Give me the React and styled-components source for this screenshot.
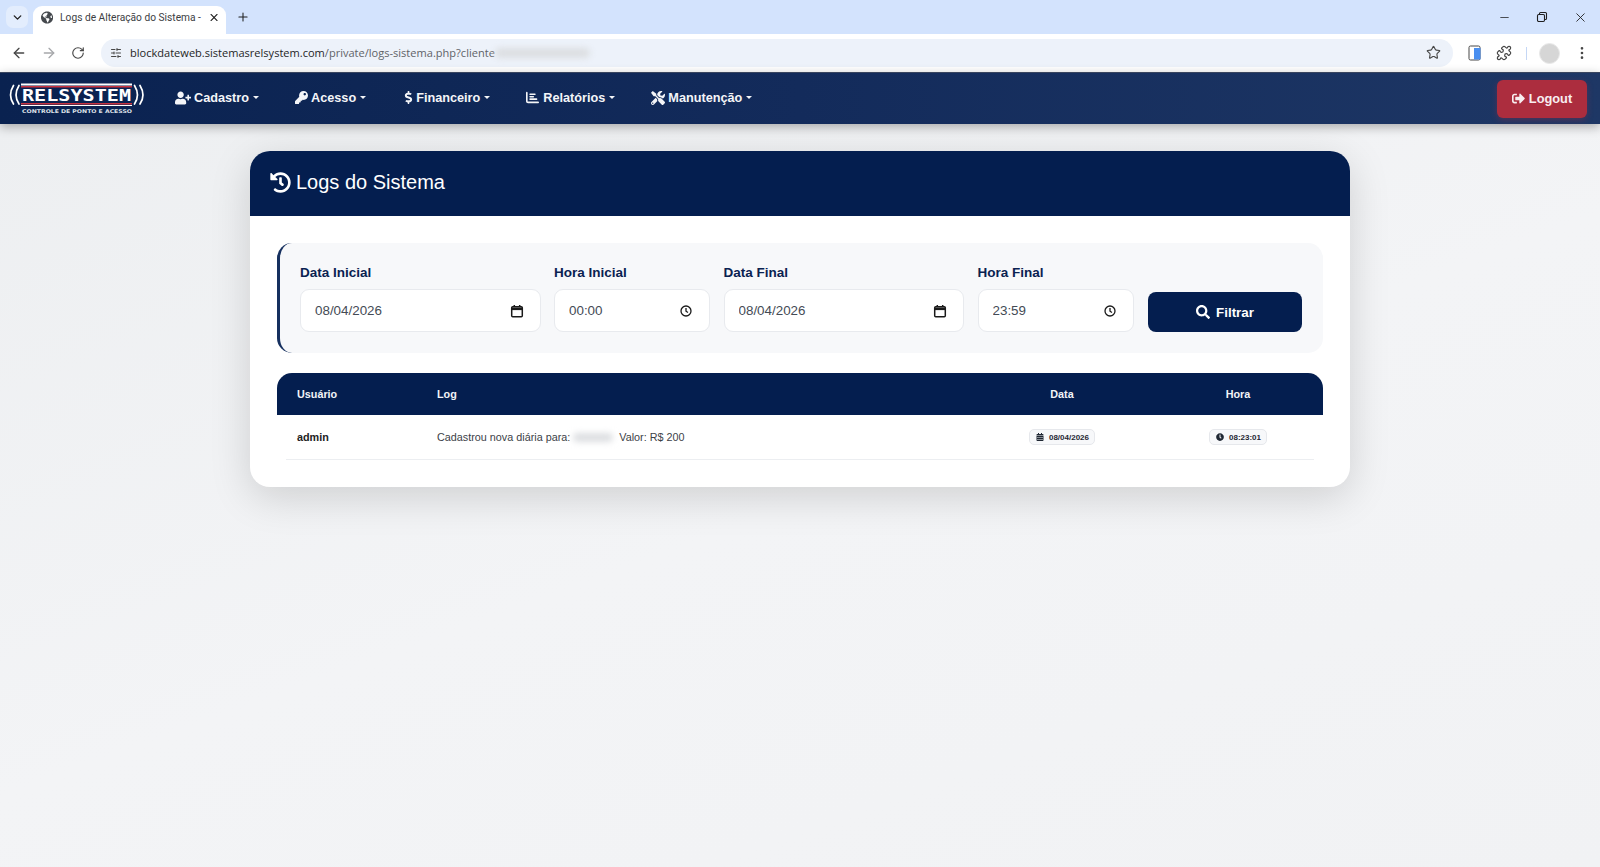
import React from 'react';
import styled, { createGlobalStyle } from 'styled-components';
import {
  ChevronDown, X, Plus, Minus, ArrowLeft, ArrowRight, RotateCw,
  SlidersHorizontal, Star, Puzzle, MoreVertical,
} from 'lucide-react';
import {
  FaUserPlus, FaKey, FaDollarSign, FaTools, FaSignOutAlt,
  FaHistory, FaSearch, FaCalendarAlt, FaClock, FaGlobeAmericas,
} from 'react-icons/fa';
import { FaChartBar } from 'react-icons/fa6';

const GlobalStyle = createGlobalStyle`
  * { box-sizing: border-box; }
  html, body { margin: 0; height: 100%; overflow: hidden; }
  body { font-family: "Liberation Sans", Arial, sans-serif; background: #f2f3f5; }
`;

const Page = styled.div`
  height: 867px;
  display: flex;
  flex-direction: column;
  background: linear-gradient(160deg, #eceef0 0%, #f3f4f6 55%, #f1f2f4 100%);
`;

const TabStrip = styled.div`
  height: 34px;
  flex: none;
  background: #d3e3fd;
  display: flex;
  align-items: flex-end;
  padding-left: 6px;
  color: #1f1f1f;
`;

const TabSearch = styled.div`
  width: 22px;
  height: 22px;
  margin-bottom: 6px;
  margin-right: 5px;
  border-radius: 7px;
  background: #e3edfd;
  display: flex;
  align-items: center;
  justify-content: center;
`;

const Tab = styled.div`
  width: 193px;
  height: 28px;
  background: #fff;
  border-radius: 9px 9px 0 0;
  display: flex;
  align-items: center;
  padding: 0 6px 5px 8px;
  font-family: Roboto, sans-serif;
  font-size: 10.2px;
  gap: 7px;
`;

const TabTitle = styled.span`
  flex: 1;
  white-space: nowrap;
  color: #3c4043;
`;

const NewTab = styled.div`
  width: 28px;
  height: 28px;
  display: flex;
  align-items: center;
  justify-content: center;
  margin-left: 3px;
  margin-bottom: 3px;
`;

const WindowControls = styled.div`
  margin-left: auto;
  height: 34px;
  display: flex;
  align-items: center;
  gap: 25px;
  padding-right: 12px;
`;

const RestoreIcon = () => (
  <svg width="12" height="12" viewBox="0 0 12 12" fill="none" stroke="#1f1f1f" strokeWidth="1.1">
    <rect x="1.5" y="3.5" width="7" height="7" rx="1.2" />
    <path d="M3.5 3.5V2.6a1.1 1.1 0 0 1 1.1-1.1h4.8a1.1 1.1 0 0 1 1.1 1.1v4.8a1.1 1.1 0 0 1-1.1 1.1h-.9" />
  </svg>
);

const Toolbar = styled.div`
  height: 38px;
  flex: none;
  background: #fff;
  display: flex;
  align-items: center;
  padding-left: 11px;
  color: #474747;
`;

const NavButtons = styled.div`
  display: flex;
  align-items: center;
  gap: 14px;
  margin-right: 16px;
`;

const UrlBar = styled.div`
  width: 1352px;
  height: 28px;
  border-radius: 14px;
  background: #edf2fa;
  display: flex;
  align-items: center;
  padding-left: 6px;
  position: relative;
`;

const SiteChip = styled.div`
  width: 18px;
  display: flex;
  justify-content: center;
  margin-right: 5px;
`;

const UrlText = styled.span`
  font-family: "Open Sans", sans-serif;
  font-size: 11.05px;
  color: #1f1f1f;
  white-space: nowrap;
  margin-bottom: 2px;
`;

const UrlPath = styled.span`
  color: #5f6368;
`;

const Blurred = styled.span`
  display: inline-block;
  width: ${(p) => p.$w}px;
  height: ${(p) => p.$h}px;
  background: #dcdee1;
  filter: blur(3px);
  border-radius: 6px;
  flex: none;
`;

const UrlStar = styled.div`
  position: absolute;
  right: 12px;
  top: 6px;
  display: flex;
`;

const ToolbarIcons = styled.div`
  display: flex;
  align-items: center;
  margin-left: 15px;
  gap: 14px;
`;

const Divider = styled.div`
  width: 1px;
  height: 13px;
  background: #c5d7f5;
`;

const Avatar = styled.div`
  width: 21px;
  height: 21px;
  border-radius: 50%;
  background: #d6d6d6;
  border: 1px solid #e8e8e8;
  margin-left: -2px;
`;

const SidePanelIcon = () => (
  <svg width="14" height="16" viewBox="0 0 14 16">
    <rect x="1" y="1" width="11" height="14" rx="1.5" fill="#fff" stroke="#474747" />
    <path d="M6 3h6.5v11.5H6z" fill="#4a8ff0" />
  </svg>
);

const Navbar = styled.nav`
  height: 52px;
  flex: none;
  display: flex;
  align-items: center;
  padding: 0 13px 2px 9px;
  background: linear-gradient(90deg, #0a2250 0%, #132b5b 50%, #1e3765 100%);
  box-shadow: 0 3px 10px rgba(0, 0, 0, 0.3);
  border-top: 1px solid #39455f;
  position: relative;
`;

const NavList = styled.div`
  display: flex;
  align-items: center;
  gap: 36px;
  margin-left: 30px;
`;

const NavItem = styled.a`
  display: flex;
  align-items: center;
  color: #f4f5f8;
  font-size: 12.7px;
  font-weight: 700;
  white-space: nowrap;

  svg {
    margin-right: ${(p) => p.$gap}px;
  }
`;

const Caret = styled.span`
  width: 0;
  height: 0;
  margin-left: 4px;
  border-left: 3.5px solid transparent;
  border-right: 3.5px solid transparent;
  border-top: 3.5px solid #f4f5f8;
`;

const LogoutButton = styled.a`
  margin-left: auto;
  width: 90px;
  height: 38px;
  margin-top: 2px;
  border-radius: 6px;
  background: #ac2d3e;
  box-shadow: 0 2px 6px rgba(172, 45, 62, 0.35);
  color: #f8eef0;
  font-size: 12.8px;
  font-weight: 700;
  display: flex;
  align-items: center;
  justify-content: center;
  gap: 4px;
`;

const Logo = () => (
  <svg width="136" height="32" viewBox="0 0 136 32">
    <g fill="none" stroke="#fff" strokeWidth="1.7" strokeLinecap="round">
      <path d="M4.5 3.5C0.5 10 0.5 16 4.5 22" />
      <path d="M10 3.5C6 10 6 16 10 22" />
      <path d="M125.5 3.5C129.5 10 129.5 16 125.5 22" />
      <path d="M131 3.5C135 10 135 16 131 22" />
    </g>
    <rect x="12" y="1.5" width="111" height="2" fill="#fff" />
    <rect x="12" y="4" width="111" height="1.5" fill="#c9323f" />
    <rect x="12" y="21" width="111" height="1.5" fill="#c9323f" />
    <rect x="12" y="23" width="111" height="1" fill="#fff" />
    <text x="13" y="18.5" fill="#fff" fontFamily="DejaVu Sans Mono" fontWeight="700" fontSize="16" textLength="109" lengthAdjust="spacingAndGlyphs">RELSYSTEM</text>
    <text x="13" y="30.5" fill="#dde0e7" fontFamily="DejaVu Sans" fontWeight="700" fontSize="5" textLength="110" lengthAdjust="spacingAndGlyphs">CONTROLE DE PONTO E ACESSO</text>
  </svg>
);

const Main = styled.main`
  display: flex;
  justify-content: center;
  padding-top: 27px;
`;

const Card = styled.section`
  width: 1100px;
  background: #fff;
  border-radius: 20px;
  box-shadow: 0 10px 40px rgba(0, 0, 0, 0.15);
`;

const CardHeader = styled.header`
  height: 65px;
  background: #041e4f;
  border-radius: 20px 20px 0 0;
  display: flex;
  align-items: center;
  gap: 5px;
  padding: 0 20px 3px;
  color: #fff;
`;

const CardTitle = styled.h1`
  margin: 0;
  font-size: 20px;
  font-weight: 400;
`;

const CardBody = styled.div`
  padding: 27px;
`;

const FilterBox = styled.form`
  height: 110px;
  background: #f7f8fa;
  border-left: 3px solid #16305f;
  border-radius: 15px;
  display: grid;
  grid-template-columns: 240.5px 156px 240.5px 156px 155px;
  column-gap: 13.5px;
  align-items: end;
  padding: 0 20px 21px 20px;
`;

const Field = styled.label`
  display: flex;
  flex-direction: column;
  gap: 9px;
`;

const FieldLabel = styled.span`
  color: #0a2251;
  font-size: 13.5px;
  font-weight: 700;
`;

const InputWrap = styled.div`
  height: 43px;
  background: #fff;
  border: 1.5px solid #e8eaee;
  border-radius: 9px;
  display: flex;
  align-items: center;
  padding: 0 16px 0 14px;
  color: #111;
`;

const FieldInput = styled.input`
  flex: 1;
  min-width: 0;
  border: 0;
  outline: 0;
  padding: 0;
  background: transparent;
  font-family: "Liberation Sans", Arial, sans-serif;
  font-size: 13.4px;
  color: #444b55;
`;

const CalendarGlyph = () => (
  <svg width="14" height="14" viewBox="0 0 14 14" fill="none" stroke="#1a1a1a" strokeWidth="1.5">
    <rect x="1.7" y="2.7" width="10.6" height="10" rx="1" />
    <path d="M1.7 4.8h10.6" strokeWidth="2.6" />
    <path d="M4.3 1v2M9.7 1v2" />
  </svg>
);

const ClockGlyph = () => (
  <svg width="14" height="14" viewBox="0 0 14 14" fill="none" stroke="#1a1a1a" strokeWidth="1.3">
    <circle cx="7" cy="7" r="5" />
    <path d="M7 4v3.2l2 1.3" />
  </svg>
);

const FilterButton = styled.button`
  height: 40px;
  margin-left: 1px;
  border: 0;
  border-radius: 8px;
  background: #041e4f;
  color: #fff;
  font-family: "Liberation Sans", Arial, sans-serif;
  font-size: 13.4px;
  font-weight: 700;
  display: flex;
  align-items: center;
  justify-content: center;
  gap: 6px;
`;

const Table = styled.div`
  margin-top: 20px;
`;

const HeadRow = styled.div`
  height: 42px;
  background: #041e4f;
  border-radius: 15px 15px 0 0;
  display: grid;
  grid-template-columns: 140px 554px 182px 170px;
  align-items: center;
`;

const HeadCell = styled.div`
  color: #f2f4f8;
  font-size: 10.8px;
  font-weight: 700;
  padding-left: ${(p) => (p.$center ? 0 : 20)}px;
  text-align: ${(p) => (p.$center ? 'center' : 'left')};
`;

const BodyRow = styled.div`
  height: 45px;
  margin: 0 9px;
  border-bottom: 1px solid #eceef1;
  display: grid;
  grid-template-columns: 131px 554px 182px 161px;
  align-items: center;
`;

const UserCell = styled.div`
  padding-left: 11px;
  color: #222;
  font-size: 10.8px;
  font-weight: 700;
`;

const LogCell = styled.div`
  padding-left: 20px;
  color: #3c4147;
  font-size: 10.8px;
  display: flex;
  align-items: center;
`;

const BadgeCell = styled.div`
  display: flex;
  justify-content: center;

  &:last-child {
    padding-left: 9px;
  }
`;

const Badge = styled.span`
  height: 16px;
  padding: 0 5px 0 6px;
  background: #f7f8fa;
  border: 1px solid #e6e8ec;
  border-radius: 5px;
  color: #1f2733;
  font-size: 8px;
  font-weight: 700;
  display: inline-flex;
  align-items: center;
  gap: 5px;
`;

const fields = [
  { label: 'Data Inicial', value: '08/04/2026', kind: 'date' },
  { label: 'Hora Inicial', value: '00:00', kind: 'time' },
  { label: 'Data Final', value: '08/04/2026', kind: 'date' },
  { label: 'Hora Final', value: '23:59', kind: 'time' },
];

const menu = [
  { label: 'Cadastro', Icon: FaUserPlus, size: 16, gap: 3 },
  { label: 'Acesso', Icon: FaKey, size: 13, gap: 3 },
  { label: 'Financeiro', Icon: FaDollarSign, size: 13, gap: 1 },
  { label: 'Relatórios', Icon: FaChartBar, size: 13, gap: 4 },
  { label: 'Manutenção', Icon: FaTools, size: 14, gap: 3 },
];

export default function App() {
  return (
    <Page>
      <GlobalStyle />
      <TabStrip>
        <TabSearch><ChevronDown size={13} strokeWidth={2.5} /></TabSearch>
        <Tab>
          <FaGlobeAmericas size={13} color="#45494e" />
          <TabTitle>Logs de Alteração do Sistema -</TabTitle>
          <X size={13} strokeWidth={2.2} />
        </Tab>
        <NewTab><Plus size={14} strokeWidth={1.8} /></NewTab>
        <WindowControls>
          <Minus size={13} strokeWidth={1.4} />
          <RestoreIcon />
          <X size={15} strokeWidth={1.4} />
        </WindowControls>
      </TabStrip>
      <Toolbar>
        <NavButtons>
          <ArrowLeft size={16} strokeWidth={2} />
          <ArrowRight size={16} strokeWidth={2} color="#a6a8ab" />
          <RotateCw size={14} strokeWidth={2} />
        </NavButtons>
        <UrlBar>
          <SiteChip><SlidersHorizontal size={12} strokeWidth={2} /></SiteChip>
          <UrlText>blockdateweb.sistemasrelsystem.com<UrlPath>/private/logs-sistema.php?cliente</UrlPath></UrlText>
          <Blurred $w={95} $h={10} />
          <UrlStar><Star size={15} strokeWidth={1.8} /></UrlStar>
        </UrlBar>
        <ToolbarIcons>
          <SidePanelIcon />
          <Puzzle size={16} strokeWidth={1.8} />
          <Divider />
          <Avatar />
          <MoreVertical size={16} strokeWidth={2} />
        </ToolbarIcons>
      </Toolbar>
      <Navbar>
        <Logo />
        <NavList>
          {menu.map(({ label, Icon, size, gap }) => (
            <NavItem key={label} $gap={gap}>
              <Icon size={size} />
              {label}
              <Caret />
            </NavItem>
          ))}
        </NavList>
        <LogoutButton><FaSignOutAlt size={13} />Logout</LogoutButton>
      </Navbar>
      <Main>
        <Card>
          <CardHeader>
            <FaHistory size={21} />
            <CardTitle>Logs do Sistema</CardTitle>
          </CardHeader>
          <CardBody>
            <FilterBox>
              {fields.map((f) => (
                <Field key={f.label}>
                  <FieldLabel>{f.label}</FieldLabel>
                  <InputWrap>
                    <FieldInput readOnly value={f.value} />
                    {f.kind === 'date' ? <CalendarGlyph /> : <ClockGlyph />}
                  </InputWrap>
                </Field>
              ))}
              <FilterButton type="button"><FaSearch size={14} />Filtrar</FilterButton>
            </FilterBox>
            <Table>
              <HeadRow>
                <HeadCell>Usuário</HeadCell>
                <HeadCell>Log</HeadCell>
                <HeadCell $center>Data</HeadCell>
                <HeadCell $center>Hora</HeadCell>
              </HeadRow>
              <BodyRow>
                <UserCell>admin</UserCell>
                <LogCell>
                  Cadastrou nova diária para:&nbsp;
                  <Blurred $w={40} $h={9} />
                  &nbsp;&nbsp;Valor: R$ 200
                </LogCell>
                <BadgeCell><Badge><FaCalendarAlt size={8} />08/04/2026</Badge></BadgeCell>
                <BadgeCell><Badge><FaClock size={8} />08:23:01</Badge></BadgeCell>
              </BodyRow>
            </Table>
          </CardBody>
        </Card>
      </Main>
    </Page>
  );
}
